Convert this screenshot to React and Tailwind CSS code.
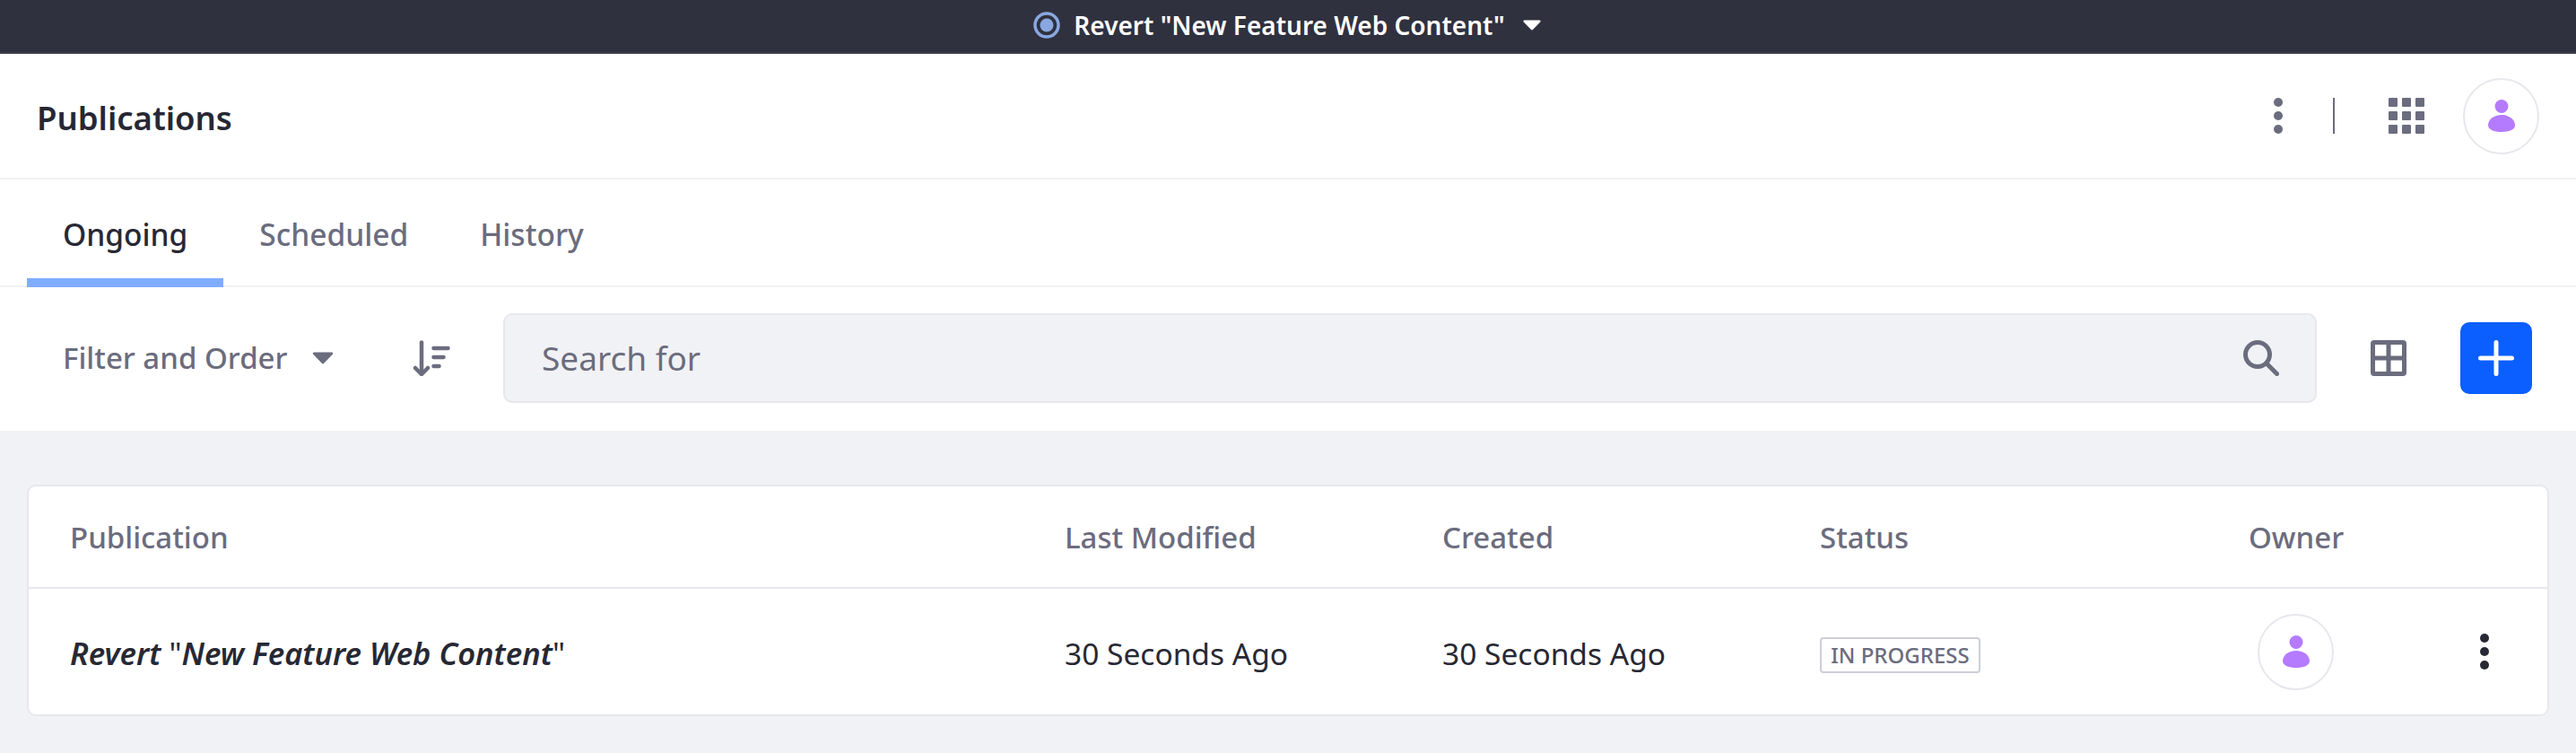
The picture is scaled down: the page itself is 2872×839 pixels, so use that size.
const Caret = ({ className = '' }) => (
  <svg viewBox="0 0 20 12" className={className} fill="currentColor">
    <path d="M1.5 0.5h17c1 0 1.500 1.200 0.800 1.900L11 11c-0.600 0.600-1.400 0.600-2 0L0.700 2.400C0 1.700 0.500 0.500 1.500 0.500z" />
  </svg>
);

const Kebab = ({ className = '' }) => (
  <svg viewBox="0 0 10 40" className={className} fill="currentColor">
    <circle cx="5" cy="5" r="5" />
    <circle cx="5" cy="20" r="5" />
    <circle cx="5" cy="35" r="5" />
  </svg>
);

const Person = ({ className = '' }) => (
  <svg viewBox="0 0 30 36" className={className} fill="#b57bff">
    <circle cx="15" cy="7.500" r="7.500" />
    <path d="M15 17c8.300 0 15 5 15 11.500 0 5-6.700 7.500-15 7.500S0 33.500 0 28.500C0 22 6.700 17 15 17z" />
  </svg>
);

const Avatar = () => (
  <div className="flex h-[85px] w-[85px] items-center justify-center rounded-full border-2 border-[#e7e7ed] bg-white">
    <Person className="h-9 w-[30px]" />
  </div>
);

const AppsGrid = () => (
  <div className="grid h-10 w-10 grid-cols-3 gap-[5px]">
    {[...Array(9)].map((_, i) => (
      <div key={i} className="h-[10px] w-[10px] rounded-[1px] bg-[#6b6c7e]" />
    ))}
  </div>
);

const SortIcon = () => (
  <svg viewBox="0 0 44 40" className="h-10 w-11 text-[#6b6c7e]" fill="none" stroke="currentColor" strokeWidth="4.500" strokeLinecap="round" strokeLinejoin="round">
    <path d="M12 2.500v35" />
    <path d="M5 31l7 7 7-7" />
    <path d="M25.500 9h16" />
    <path d="M25.500 19h11" />
    <path d="M25.500 29h6" />
  </svg>
);

const SearchIcon = () => (
  <svg viewBox="0 0 40 40" className="h-10 w-10 text-[#6b6c7e]" fill="none" stroke="currentColor" strokeWidth="5" strokeLinecap="round">
    <circle cx="16" cy="16" r="13.500" />
    <path d="M27 27l10.500 10.500" />
  </svg>
);

const TableIcon = () => (
  <svg viewBox="0 0 40 40" className="h-10 w-10 text-[#6b6c7e]" fill="none" stroke="currentColor" strokeWidth="5">
    <rect x="2.500" y="2.500" width="35" height="35" rx="1.500" />
    <path d="M20 2v36M2 20h36" strokeWidth="5" />
  </svg>
);

const PlusIcon = () => (
  <svg viewBox="0 0 40 40" className="h-10 w-10 text-white" fill="none" stroke="currentColor" strokeWidth="5" strokeLinecap="round">
    <path d="M20 2.500v35M2.500 20h35" />
  </svg>
);

const tabs = ['Ongoing', 'Scheduled', 'History'];

export default function App() {
  return (
    <div className="flex h-[839px] flex-col bg-[#f1f2f5] font-['Noto_Sans','Open_Sans',sans-serif] text-[#272833]">
      <div className="flex h-[60px] shrink-0 items-center justify-center border-b-2 border-[#3e3f4c] bg-[#30313f] pb-[2px] pr-[2px]">
        <svg viewBox="0 0 30 30" className="mr-[15px] h-[30px] w-[30px]">
          <circle cx="15" cy="15" r="13" fill="none" stroke="#89a7e0" strokeWidth="3.500" />
          <circle cx="15" cy="15" r="7.500" fill="#89a7e0" />
        </svg>
        <span className="text-[28px] font-semibold text-white">Revert "New Feature Web Content"</span>
        <Caret className="ml-[20px] h-3 w-5 text-white" />
      </div>

      <div className="flex h-[140px] shrink-0 items-center border-b-2 border-[#f1f2f5] bg-white pl-[41px] pr-[41px]">
        <h1 className="pt-1 text-[36.5px] font-semibold">Publications</h1>
        <div className="ml-auto flex items-center">
          <Kebab className="h-10 w-[10px] text-[#6b6c7e]" />
          <div className="ml-[56px] h-10 w-[2px] bg-[#6b6c7e]" />
          <div className="ml-[60px]"><AppsGrid /></div>
          <div className="ml-[43px]"><Avatar /></div>
        </div>
      </div>

      <div className="flex h-[120px] shrink-0 items-stretch border-b-2 border-[#f1f2f5] bg-white pl-[30px]">
        {tabs.map((t, i) => (
          <div
            key={t}
            className={`-mb-[2px] flex items-center px-[40px] pt-[2px] text-[33.5px] font-medium ${
              i === 0 ? 'border-b-[10px] border-[#80acff] pt-[12px] text-[#272833]' : 'text-[#6b6c7e]'
            }`}
          >
            {t}
          </div>
        ))}
      </div>

      <div className="flex h-[160px] shrink-0 items-center bg-white pb-[2px] pl-[70px] pr-[49px]">
        <div className="flex w-[306px] items-center text-[#6b6c7e]">
          <span className="text-[33px] font-medium">Filter and Order</span>
          <Caret className="ml-[26px] h-[14px] w-[26px]" />
        </div>
        <div className="ml-[82px]"><SortIcon /></div>
        <div className="ml-[59px] flex h-[100px] flex-1 items-center rounded-[10px] border-2 border-[#e7e7ed] bg-[#f1f2f5] pl-[41px] pr-[40px]">
          <span className="text-[37px] text-[#6b6c7e]">Search for</span>
          <div className="ml-auto"><SearchIcon /></div>
        </div>
        <div className="ml-[60px]"><TableIcon /></div>
        <div className="ml-[60px] flex h-20 w-20 items-center justify-center rounded-[10px] bg-[#0b5fff]">
          <PlusIcon />
        </div>
      </div>

      <div className="px-[30px] pt-[60px]">
        <div className="h-[258px] rounded-[10px] border-2 border-[#e7e7ed] bg-white">
          <div className="grid h-[114px] grid-cols-[1109px_421px_421px_478px_1fr] items-center border-b-2 border-[#e7e7ed] pl-[46px] pt-[2px] text-[33px] font-medium text-[#6b6c7e]">
            <div>Publication</div>
            <div>Last Modified</div>
            <div>Created</div>
            <div>Status</div>
            <div>Owner</div>
          </div>
          <div className="grid h-[140px] grid-cols-[1109px_421px_421px_478px_1fr] items-center pl-[46px] text-[33.5px]">
            <div className="pt-1 text-[34.5px]">
              <span className="font-semibold italic">Revert </span>
              <span>"</span>
              <span className="font-semibold italic">New Feature Web Content</span>
              <span>"</span>
            </div>
            <div className="pt-1">30 Seconds Ago</div>
            <div className="pt-1">30 Seconds Ago</div>
            <div>
              <span className="inline-flex h-10 w-[179px] items-center justify-center rounded-[4px] border-2 border-[#cdced9] text-[24px] font-medium uppercase text-[#6b6c7e]">
                In Progress
              </span>
            </div>
            <div className="flex items-center pl-[10px]">
              <Avatar />
              <Kebab className="ml-[163px] h-10 w-[10px] text-[#272833]" />
            </div>
          </div>
        </div>
      </div>
    </div>
  );
}
